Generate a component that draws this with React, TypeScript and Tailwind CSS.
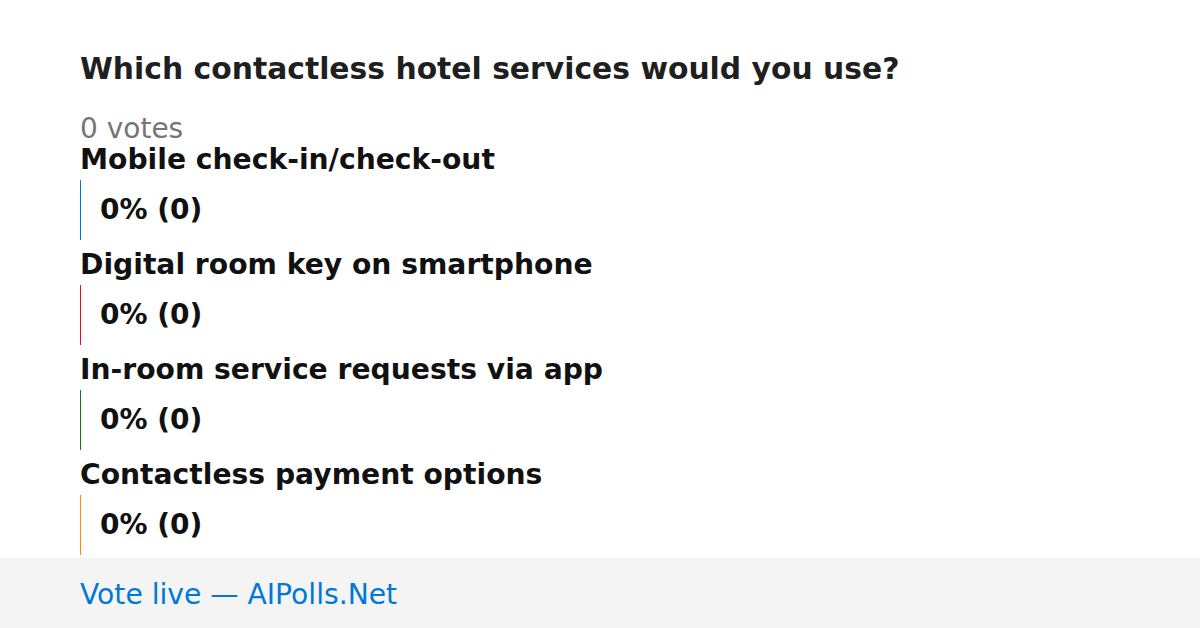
import React from 'react';

const options = [
  { label: 'Mobile check-in/check-out', color: 'border-[#0078d4]' },
  { label: 'Digital room key on smartphone', color: 'border-[#e81123]' },
  { label: 'In-room service requests via app', color: 'border-[#107c10]' },
  { label: 'Contactless payment options', color: 'border-[#ff8c00]' },
];

const App: React.FC = () => {
  return (
    <div
      className="w-[1200px] h-[628px] flex flex-col bg-white overflow-hidden"
      style={{ fontFamily: '"DejaVu Sans", sans-serif' }}
    >
      <div className="flex-1 pl-[80px] pt-[51px]">
        <h1 className="text-[29.8px] leading-[36px] font-bold text-[#1f1f1f]">
          Which contactless hotel services would you use?
        </h1>
        <div className="mt-[27px] text-[28px] leading-[30px] text-[#767676]">0 votes</div>
        <div className="flex flex-col gap-[9px]">
          {options.map((o) => (
            <div key={o.label}>
              <div className="text-[28.2px] leading-[31px] font-bold text-[#111111] mb-[5px]">{o.label}</div>
              <div className={`h-[60px] border-l ${o.color} pl-[19px] flex items-center`}>
                <span className="text-[28px] font-bold text-[#111111]">0% (0)</span>
              </div>
            </div>
          ))}
        </div>
      </div>
      <div className="h-[70px] bg-[#f4f4f4] pl-[80px] pt-[5px] flex items-center">
        <span className="text-[28.2px] text-[#0078d4]">Vote live — AIPolls.Net</span>
      </div>
    </div>
  );
};

export default App;
